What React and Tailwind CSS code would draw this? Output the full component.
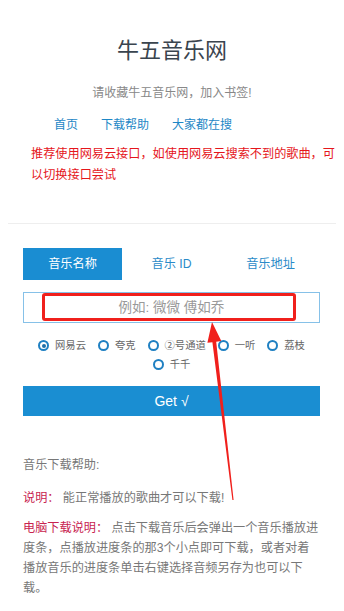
import { useState } from 'react';

const sources = ['网易云', '夸克', '②号通道', '一听', '荔枝', '千千'];
const tabs = ['音乐名称', '音乐 ID', '音乐地址'];

function Radio({ label, checked, onClick }) {
  return (
    <label className="flex items-center gap-[6px] cursor-pointer" onClick={onClick}>
      <span className="shrink-0 w-[11px] h-[11px] rounded-full border-2 border-[#1f80c2] flex items-center justify-center">
        {checked && <span className="w-[4px] h-[4px] rounded-full bg-[#1f6fa8]"></span>}
      </span>
      <span className="text-[10.3px] text-[#666]">{label}</span>
    </label>
  );
}

export default function App() {
  const [tab, setTab] = useState(0);
  const [source, setSource] = useState(0);

  return (
    <div className="relative w-[344px] min-h-[611px] bg-white font-['Liberation_Sans','Noto_Sans_CJK_SC',sans-serif] overflow-hidden">
      {/* header */}
      <div className="pt-[36px] text-center">
        <h1 className="text-[22px] leading-[30px] text-[#3a444e]">牛五音乐网</h1>
        <p className="mt-[17px] text-[12px] leading-[20px] text-[#888]">请收藏牛五音乐网，加入书签!</p>
      </div>
      <nav className="mt-[12px] pl-[54px] flex gap-[23px] text-[12px] leading-[20px] text-[#1e87c6]">
        <a href="#">首页</a>
        <a href="#">下载帮助</a>
        <a href="#">大家都在搜</a>
      </nav>
      <p className="mt-[9px] pl-[31px] pr-[6px] text-[12.16px] leading-[21px] text-[#e5161c]">
        推荐使用网易云接口，如使用网易云搜索不到的歌曲，可以切换接口尝试
      </p>

      <div className="mt-[37px] mx-[8px] border-t border-[#eee]"></div>

      {/* search */}
      <div className="px-[23px] pr-[24px] mt-[24px]">
        <div className="grid grid-cols-3 h-[32px] text-[12.2px]">
          {tabs.map((t, i) => (
            <button
              key={t}
              onClick={() => setTab(i)}
              className={i === tab ? 'bg-[#1a8dd2] text-white' : 'text-[#2a8ac8]'}
            >
              {t}
            </button>
          ))}
        </div>
        <input
          className="mt-[12px] w-full h-[31px] border border-[#86c1e8] text-center text-[13.5px] text-[#555] placeholder:text-[#999] outline-none"
          placeholder="例如: 微微 傅如乔"
        />
        <div className="mt-[13px] flex flex-wrap justify-center gap-x-[12px] leading-[19px] h-[38px]">
          {sources.map((s, i) => (
            <Radio key={s} label={s} checked={i === source} onClick={() => setSource(i)} />
          ))}
        </div>
        <button className="mt-[12px] w-full h-[30px] bg-[#1a8ed2] text-white text-[14px]">Get √</button>
      </div>

      {/* help */}
      <div className="px-[23px] pr-[24px] mt-[39px] text-[12.16px] leading-[20px] text-[#777]">
        <p>音乐下载帮助:</p>
        <p className="mt-[13px]"><span className="text-[#c8234f]">说明：</span> 能正常播放的歌曲才可以下载!</p>
        <p className="mt-[10px]"><span className="text-[#c8234f]">电脑下载说明：</span> 点击下载音乐后会弹出一个音乐播放进度条，点播放进度条的那3个小点即可下载，或者对着播放音乐的进度条单击右键选择音频另存为也可以下载。</p>
      </div>

      {/* annotation overlay */}
      <div className="absolute left-[42px] top-[293px] w-[254px] h-[28px] border-[3px] border-[#f0201c] rounded-[3px] pointer-events-none"></div>
      <svg className="absolute left-0 top-0 pointer-events-none" width="344" height="611" viewBox="0 0 344 611">
        <polygon points="212,322 207.4,342.7 212.4,342.2 232.4,500 233.6,500 216.2,341.7 221.3,341.1" fill="#f0201c" />
      </svg>
    </div>
  );
}
